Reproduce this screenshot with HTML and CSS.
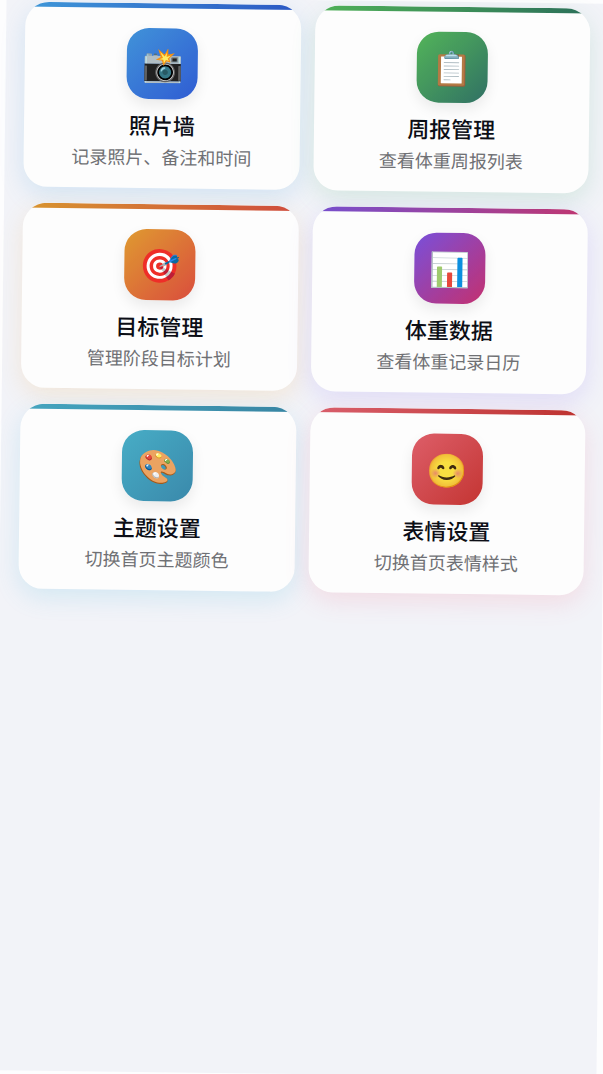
FILE: index.html
```html
<!DOCTYPE html>
<html lang="zh-CN">
<head>
    <meta charset="UTF-8">
    <meta name="viewport" content="width=device-width, initial-scale=1">
    <title>功能菜单</title>
    <link rel="stylesheet" href="styles.css">
</head>
<body>
<main class="page">
    <nav class="menu">
        <a class="card blue" href="#photo">
            <span class="icon">📸</span>
            <span class="title">照片墙</span>
            <span class="desc">记录照片、备注和时间</span>
        </a>
        <a class="card green" href="#report">
            <span class="icon">📋</span>
            <span class="title">周报管理</span>
            <span class="desc">查看体重周报列表</span>
        </a>
        <a class="card orange" href="#goal">
            <span class="icon">🎯</span>
            <span class="title">目标管理</span>
            <span class="desc">管理阶段目标计划</span>
        </a>
        <a class="card purple" href="#weight">
            <span class="icon">📊</span>
            <span class="title">体重数据</span>
            <span class="desc">查看体重记录日历</span>
        </a>
        <a class="card cyan" href="#theme">
            <span class="icon">🎨</span>
            <span class="title">主题设置</span>
            <span class="desc">切换首页主题颜色</span>
        </a>
        <a class="card red" href="#emoji">
            <span class="icon">😊</span>
            <span class="title">表情设置</span>
            <span class="desc">切换首页表情样式</span>
        </a>
    </nav>
</main>
</body>
</html>
```
FILE: styles.css
```css
*{
    margin:0;
    padding:0;
    box-sizing: border-box;
}
body{
    background-color: #fdfdfe;
    font-family: "Noto Sans CJK SC", sans-serif;
    overflow: hidden;
}
/* 整页轻微倾斜 */
.page{
    min-height: 100vh;
    padding:5px 19px;
    background-color: #f2f3f8;
    transform: rotate(0.7deg);
}
.menu{
    display: grid;
    grid-template-columns: 1fr 1fr;
    gap:16px 14px;
}
.card{
    display: flex;
    flex-direction: column;
    align-items: center;
    padding-bottom:16px;
    border-radius: 24px;
    background-color: #fdfdfd;
    color:#0c0e16;
    text-decoration: none;
    overflow: hidden;
}
/* 顶部彩条 */
.card::before{
    content:"";
    width:100%;
    height:5px;
    margin-bottom:20px;
    background-image: var(--bar);
}
.icon{
    width:71px;
    height:71px;
    border-radius: 22px;
    background-image: var(--tile);
    box-shadow: 0 6px 14px rgba(0,0,0,.08);
    font-size:33px;
    line-height: 68px;
    text-align: center;
    filter: saturate(.9);
}
.title{
    margin-top:9px;
    font-size:22px;
    font-weight: 500;
    line-height: 32px;
}
.desc{
    color:#6f7074;
    font-size:18px;
    line-height: 32px;
}
.blue{
    --bar:linear-gradient(90deg,#3f97d8,#2b58c4);
    --tile:linear-gradient(135deg,#3994e2,#2b5ce0);
    box-shadow: 0 8px 24px rgba(70,160,220,.18);
}
.green{
    --bar:linear-gradient(90deg,#4fb157,#2c705a);
    --tile:linear-gradient(135deg,#4bb852,#2b7264);
    box-shadow: 0 8px 24px rgba(60,170,110,.16);
}
.orange{
    --bar:linear-gradient(90deg,#d8952f,#cf4b3c);
    --tile:linear-gradient(135deg,#e69a24,#e64a38);
    box-shadow: 0 8px 24px rgba(240,170,60,.16);
}
.purple{
    --bar:linear-gradient(90deg,#7550cf,#c0366f);
    --tile:linear-gradient(135deg,#7b4ee8,#d02c72);
    box-shadow: 0 8px 24px rgba(130,100,240,.16);
}
.cyan{
    --bar:linear-gradient(90deg,#45a5bf,#3885a3);
    --tile:linear-gradient(135deg,#3eafcb,#338bb0);
    box-shadow: 0 8px 24px rgba(70,185,220,.18);
}
.red{
    --bar:linear-gradient(90deg,#d95f6c,#bd322f);
    --tile:linear-gradient(135deg,#e85b67,#d0322f);
    box-shadow: 0 8px 24px rgba(240,100,130,.16);
}
```
